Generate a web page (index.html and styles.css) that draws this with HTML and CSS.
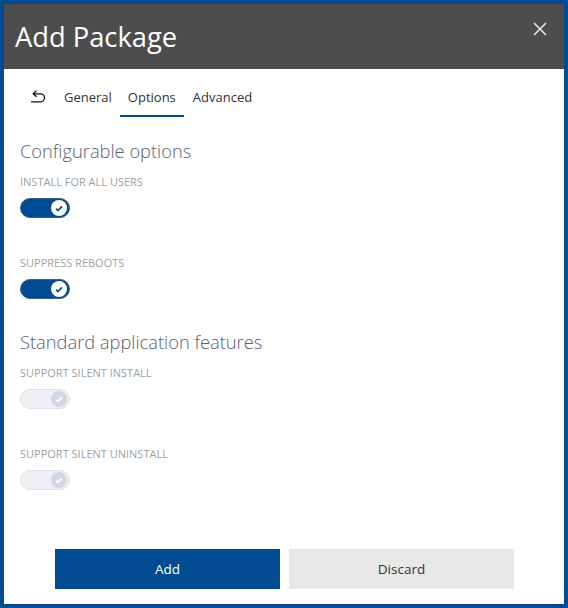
FILE: index.html
```html
<!DOCTYPE html>
<html lang="en">
<head>
<meta charset="utf-8">
<title>Add Package</title>
<link rel="stylesheet" href="styles.css">
</head>
<body>
<div class="dialog">
  <header class="dialog-header">
    <h1 class="dialog-title">Add Package</h1>
    <button class="close-btn" aria-label="Close">
      <svg width="14" height="14" viewBox="0 0 14 14"><path d="M1 1 L13 13 M13 1 L1 13" stroke="#e6e6e6" stroke-width="1.6" fill="none"/></svg>
    </button>
  </header>
  <nav class="tabs">
    <span class="back-icon">
      <svg width="16" height="14" viewBox="0 0 16 14"><path d="M6.5 0.8 L3.2 3.8 L6.5 6.8" stroke="#111" stroke-width="1.3" fill="none"/><path d="M3.4 3.8 H10.5 A4 4 0 0 1 10.5 11.8 H1" stroke="#111" stroke-width="1.3" fill="none"/></svg>
    </span>
    <span class="tab">General</span>
    <span class="tab active">Options</span>
    <span class="tab">Advanced</span>
  </nav>
  <main class="content">
    <h2 class="section-title">Configurable options</h2>
    <div class="field">
      <div class="field-label">INSTALL FOR ALL USERS</div>
      <div class="toggle on"><span class="knob"><svg width="8" height="7" viewBox="0 0 8 7"><path d="M1 3.6 L3 5.5 L7 1.3" stroke="#004b91" stroke-width="1.7" fill="none"/></svg></span></div>
    </div>
    <div class="field">
      <div class="field-label">SUPPRESS REBOOTS</div>
      <div class="toggle on"><span class="knob"><svg width="8" height="7" viewBox="0 0 8 7"><path d="M1 3.6 L3 5.5 L7 1.3" stroke="#004b91" stroke-width="1.7" fill="none"/></svg></span></div>
    </div>
    <h2 class="section-title second">Standard application features</h2>
    <div class="field">
      <div class="field-label">SUPPORT SILENT INSTALL</div>
      <div class="toggle disabled"><span class="knob"><svg width="8" height="7" viewBox="0 0 8 7"><path d="M1 3.6 L3 5.5 L7 1.3" stroke="#ffffff" stroke-width="1.7" fill="none"/></svg></span></div>
    </div>
    <div class="field">
      <div class="field-label">SUPPORT SILENT UNINSTALL</div>
      <div class="toggle disabled"><span class="knob"><svg width="8" height="7" viewBox="0 0 8 7"><path d="M1 3.6 L3 5.5 L7 1.3" stroke="#ffffff" stroke-width="1.7" fill="none"/></svg></span></div>
    </div>
  </main>
  <footer class="footer">
    <button class="btn primary">Add</button>
    <button class="btn secondary">Discard</button>
  </footer>
</div>
</body>
</html>
```
FILE: styles.css
```css
html, body {
  margin: 0;
  padding: 0;
}
body {
  font-family: "Open Sans", "Noto Sans", sans-serif;
  background: #fff;
}
.dialog {
  box-sizing: border-box;
  width: 568px;
  height: 608px;
  border: 4px solid #004b91;
  display: flex;
  flex-direction: column;
  background: #fff;
}
.dialog-header {
  height: 65px;
  background: #4d4d4d;
  display: flex;
  align-items: center;
  justify-content: space-between;
  padding-left: 11px;
  padding-right: 17px;
}
.dialog-title {
  margin: 0;
  font-weight: 400;
  font-size: 27.3px;
  color: #fff;
  line-height: 36px;
}
.close-btn {
  align-self: flex-start;
  margin-top: 18px;
  background: none;
  border: 0;
  padding: 0;
  width: 14px;
  height: 14px;
  display: flex;
}
.tabs {
  display: flex;
  align-items: flex-end;
  margin-top: 12px;
  padding-left: 26px;
}
.back-icon {
  display: flex;
  width: 16px;
  height: 14px;
  margin-right: 10px;
  align-self: center;
  margin-top: -4px;
}
.tab {
  font-size: 13px;
  line-height: 20px;
  color: #333;
  padding: 6px 8px 8px;
  border-bottom: 2px solid transparent;
}
.tab:last-child {
  padding-left: 9px;
}
.tab.active {
  border-bottom-color: #004b91;
}
.content {
  padding: 20px 16px 0;
}
.section-title {
  margin: 0;
  font-size: 18.3px;
  font-weight: 300;
  line-height: 28px;
  color: #5b6174;
}
.section-title.second {
  margin-top: 29px;
}
.field {
  margin-top: 9px;
}
.field + .field {
  margin-top: 37px;
}
.field-label {
  font-size: 11px;
  line-height: 16px;
  color: #a0a0a0;
}
.toggle {
  box-sizing: border-box;
  margin-top: 8px;
  width: 50px;
  height: 20px;
  border-radius: 10px;
  border: 1px solid #3d5f86;
  position: relative;
}
.toggle.on {
  background: #004b91;
}
.toggle.disabled {
  background: #eef0f4;
  border-color: #dde0e6;
}
.knob {
  position: absolute;
  top: 1px;
  right: 2px;
  width: 16px;
  height: 16px;
  border-radius: 50%;
  display: flex;
  align-items: center;
  justify-content: center;
}
.toggle.on .knob {
  background: #fff;
}
.toggle.disabled .knob {
  background: #d3d7df;
}
.footer {
  margin-top: auto;
  display: flex;
  justify-content: center;
  gap: 9px;
  padding-bottom: 15px;
  padding-left: 1px;
}
.btn {
  width: 225px;
  height: 40px;
  border: 0;
  font-family: "Open Sans", "Noto Sans", sans-serif;
  font-size: 13.5px;
  padding: 0;
}
.btn.primary {
  background: #004b91;
  color: #fff;
}
.btn.secondary {
  background: #e8e8e8;
  color: #333;
}
```
